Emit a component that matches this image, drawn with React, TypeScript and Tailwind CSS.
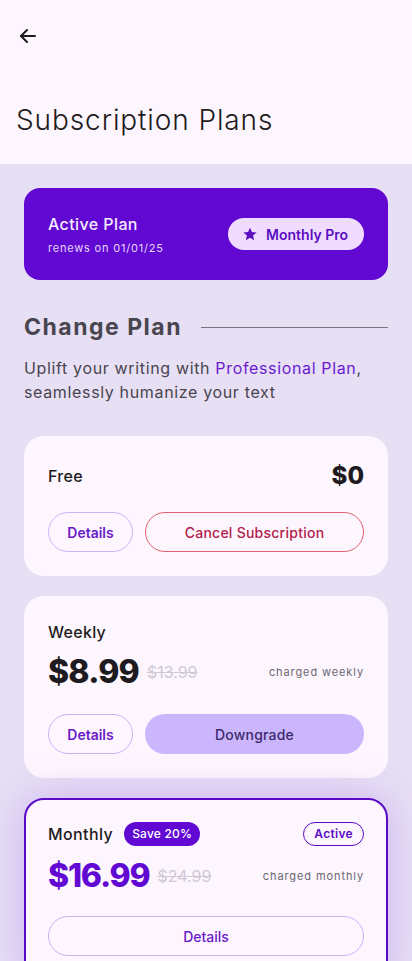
import React from "react";

const font = { fontFamily: "Inter, 'Noto Sans', sans-serif" };

function Star() {
  return (
    <svg width="16" height="16" viewBox="0 0 24 24" fill="#5b0fc2">
      <path d="M12 2.5l2.9 6.6 7.1.6-5.4 4.7 1.6 7-6.2-3.7-6.2 3.7 1.6-7L2 9.7l7.1-.6z" />
    </svg>
  );
}

export default function App() {
  return (
    <div className="w-[412px] min-h-[961px] bg-[#e7dff4] overflow-hidden" style={font}>
      <div className="bg-[#fdf6fe] h-[164px] flex flex-col">
        <div className="h-[72px] flex items-center pl-4">
          <svg width="24" height="24" viewBox="0 0 24 24" fill="none" stroke="#1d1b20" strokeWidth="2" strokeLinecap="round" strokeLinejoin="round">
            <path d="M19 12H5" />
            <path d="M11 6l-6 6 6 6" />
          </svg>
        </div>
        <h1 className="mt-[30px] pl-4 text-[28px] leading-[36px] font-light text-[#1d1b20] tracking-[0.9px]">Subscription Plans</h1>
      </div>

      <div className="px-6 pt-6 pb-10">
        <div className="h-[92px] rounded-[16px] bg-[#6109d2] px-6 flex items-center justify-between">
          <div className="flex flex-col">
            <span className="text-[16px] leading-[24px] font-medium text-[#f6ecff] tracking-[0.4px]">Active Plan</span>
            <span className="mt-1 text-[11px] leading-[16px] text-[#e6d4fb] tracking-[0.8px]">renews on 01/01/25</span>
          </div>
          <div className="h-8 rounded-full bg-[#f0dcff] pl-[14px] pr-4 flex items-center gap-2">
            <Star />
            <span className="text-[14px] font-semibold text-[#5b0fc2]">Monthly Pro</span>
          </div>
        </div>

        <div className="mt-[33px] flex items-center gap-[19px]">
          <h2 className="text-[23px] leading-[28px] font-bold text-[#49454f] tracking-[1.5px]">Change Plan</h2>
          <div className="flex-1 h-px bg-[#7a7582]" />
        </div>
        <p className="mt-[15px] text-[16px] leading-[24px] text-[#49454f] tracking-[0.65px]">
          Uplift your writing with <span className="text-[#6a1bd0]">Professional Plan</span>, seamlessly humanize your text
        </p>

        <div className="mt-8 rounded-[20px] bg-[#fdf6fe] p-6">
          <div className="h-8 flex items-center justify-between">
            <span className="text-[16px] font-medium text-[#1d1b20] tracking-[0.3px]">Free</span>
            <span className="text-[24px] font-extrabold text-[#1d1b20]">$0</span>
          </div>
          <div className="mt-5 flex gap-3">
            <button className="h-10 w-[85px] rounded-full border border-[#c7b5f6] text-[14px] font-semibold text-[#6a1bc9]">Details</button>
            <button className="h-10 flex-1 rounded-full border border-[#e0626f] text-[14px] font-medium text-[#b2214a] tracking-[0.25px]">Cancel Subscription</button>
          </div>
        </div>

        <div className="mt-5 rounded-[20px] bg-[#fdf6fe] p-6">
          <div className="text-[16px] leading-[24px] font-medium text-[#1d1b20] tracking-[0.3px]">Weekly</div>
          <div className="mt-2 h-10 flex items-center">
            <span className="text-[32px] font-extrabold text-[#1d1b20] tracking-[-0.8px]">$8.99</span>
            <span className="ml-2 text-[16px] text-[#cfc8d5] line-through">$13.99</span>
            <span className="ml-auto text-[11px] text-[#6b6672] tracking-[0.9px]">charged weekly</span>
          </div>
          <div className="mt-[22px] flex gap-3">
            <button className="h-10 w-[85px] rounded-full border border-[#c7b5f6] text-[14px] font-semibold text-[#6a1bc9]">Details</button>
            <button className="h-10 flex-1 rounded-full bg-[#cbb5fd] text-[14px] font-medium text-[#3d2a6c] tracking-[0.2px]">Downgrade</button>
          </div>
        </div>

        <div className="mt-5 rounded-[20px] bg-[#fdf6fe] border-2 border-[#5b0bc6] px-[22px] pt-[22px] pb-6 shadow-[0_0_40px_rgba(150,100,240,0.35)]">
          <div className="h-6 flex items-center">
            <span className="text-[16px] font-medium text-[#1d1b20] tracking-[0.4px]">Monthly</span>
            <span className="ml-[11px] h-6 px-2 rounded-full bg-[#6109d2] text-[12px] font-medium text-white flex items-center tracking-[0.2px]">Save 20%</span>
            <span className="ml-auto h-6 px-[10px] rounded-full border-[1.5px] border-[#5b0bc6] text-[12px] font-semibold text-[#5b0bc6] flex items-center tracking-[0.3px]">Active</span>
          </div>
          <div className="mt-[10px] h-10 flex items-center">
            <span className="text-[32px] font-extrabold text-[#6109d2] tracking-[-1.2px]">$16.99</span>
            <span className="ml-2 text-[16px] text-[#cfc8d5] line-through">$24.99</span>
            <span className="ml-auto text-[11px] text-[#6b6672] tracking-[0.9px]">charged monthly</span>
          </div>
          <div className="mt-5 flex">
            <button className="h-10 flex-1 rounded-full border border-[#c7b5f6] text-[14px] font-medium text-[#6a1bc9]">Details</button>
          </div>
        </div>
      </div>
    </div>
  );
}
